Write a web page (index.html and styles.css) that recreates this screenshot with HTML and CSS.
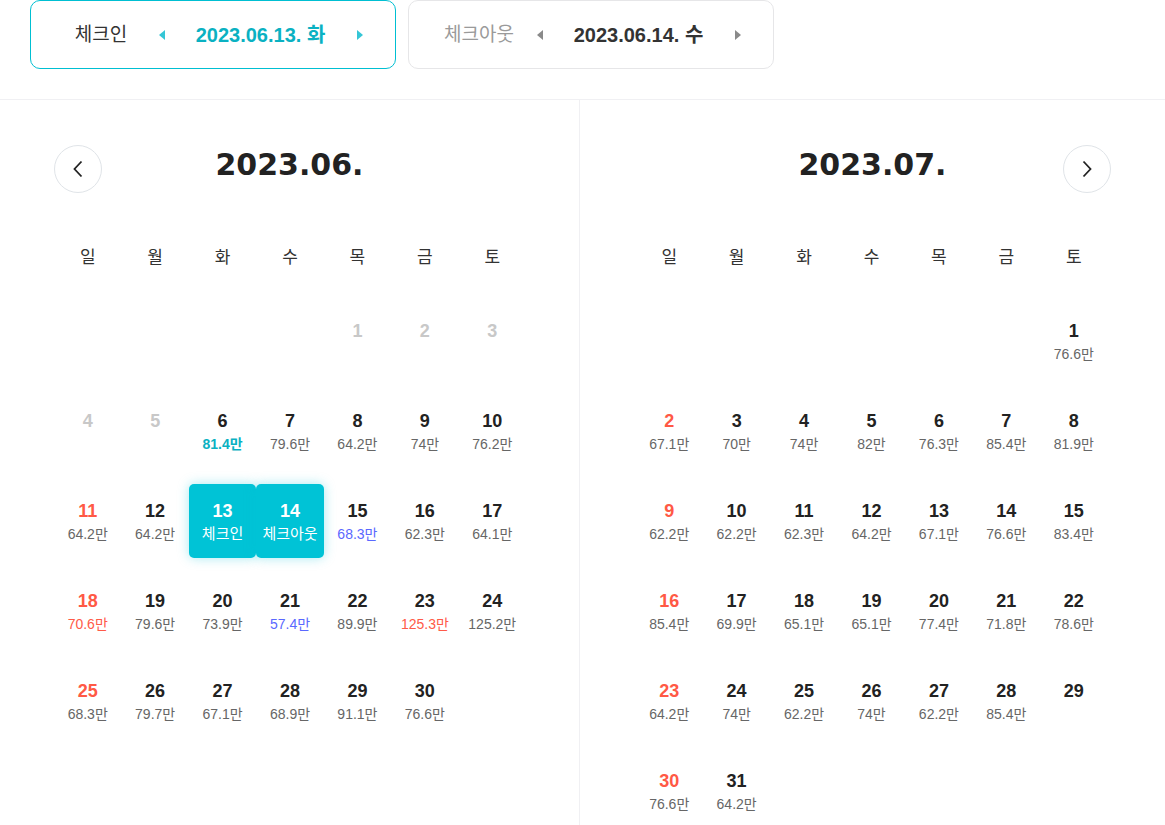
FILE: index.html
```html
<!DOCTYPE html>
<html lang="ko">
<head>
<meta charset="utf-8">
<title>날짜 선택</title>
<link rel="stylesheet" href="styles.css">
</head>
<body>
<div class="page">
  <div class="topbar">
    <div class="datebox active">
      <span class="label">체크인</span>
      <span class="tri left"></span>
      <span class="date">2023.06.13. 화</span>
      <span class="tri right"></span>
    </div>
    <div class="datebox">
      <span class="label">체크아웃</span>
      <span class="tri left"></span>
      <span class="date">2023.06.14. 수</span>
      <span class="tri right"></span>
    </div>
  </div>

  <div class="months">
    <section class="month first">
      <div class="mhead">
        <button class="circle"><svg width="12" height="18" viewBox="0 0 12 18"><path d="M9.5 1.5 L2.5 9 L9.5 16.5" fill="none" stroke="#222" stroke-width="1.8"/></svg></button>
        <h2 class="mtitle">2023.06.</h2>
        <span class="spacer"></span>
      </div>
      <div class="week">
        <span>일</span><span>월</span><span>화</span><span>수</span><span>목</span><span>금</span><span>토</span>
      </div>
      <div class="days">
        <div class="day"></div><div class="day"></div><div class="day"></div><div class="day"></div>
        <div class="day off"><b>1</b></div>
        <div class="day off"><b>2</b></div>
        <div class="day off"><b>3</b></div>

        <div class="day off"><b>4</b></div>
        <div class="day off"><b>5</b></div>
        <div class="day"><b>6</b><i class="best">81.4만</i></div>
        <div class="day"><b>7</b><i>79.6만</i></div>
        <div class="day"><b>8</b><i>64.2만</i></div>
        <div class="day"><b>9</b><i>74만</i></div>
        <div class="day"><b>10</b><i>76.2만</i></div>

        <div class="day sun"><b>11</b><i>64.2만</i></div>
        <div class="day"><b>12</b><i>64.2만</i></div>
        <div class="day sel"><b>13</b><i>체크인</i></div>
        <div class="day sel"><b>14</b><i>체크아웃</i></div>
        <div class="day"><b>15</b><i class="low">68.3만</i></div>
        <div class="day"><b>16</b><i>62.3만</i></div>
        <div class="day"><b>17</b><i>64.1만</i></div>

        <div class="day sun"><b>18</b><i class="high">70.6만</i></div>
        <div class="day"><b>19</b><i>79.6만</i></div>
        <div class="day"><b>20</b><i>73.9만</i></div>
        <div class="day"><b>21</b><i class="low">57.4만</i></div>
        <div class="day"><b>22</b><i>89.9만</i></div>
        <div class="day"><b>23</b><i class="high">125.3만</i></div>
        <div class="day"><b>24</b><i>125.2만</i></div>

        <div class="day sun"><b>25</b><i>68.3만</i></div>
        <div class="day"><b>26</b><i>79.7만</i></div>
        <div class="day"><b>27</b><i>67.1만</i></div>
        <div class="day"><b>28</b><i>68.9만</i></div>
        <div class="day"><b>29</b><i>91.1만</i></div>
        <div class="day"><b>30</b><i>76.6만</i></div>
      </div>
    </section>

    <section class="month second">
      <div class="mhead">
        <span class="spacer"></span>
        <h2 class="mtitle">2023.07.</h2>
        <button class="circle"><svg width="12" height="18" viewBox="0 0 12 18"><path d="M2.5 1.5 L9.5 9 L2.5 16.5" fill="none" stroke="#222" stroke-width="1.8"/></svg></button>
      </div>
      <div class="week">
        <span>일</span><span>월</span><span>화</span><span>수</span><span>목</span><span>금</span><span>토</span>
      </div>
      <div class="days">
        <div class="day"></div><div class="day"></div><div class="day"></div><div class="day"></div><div class="day"></div><div class="day"></div>
        <div class="day"><b>1</b><i>76.6만</i></div>

        <div class="day sun"><b>2</b><i>67.1만</i></div>
        <div class="day"><b>3</b><i>70만</i></div>
        <div class="day"><b>4</b><i>74만</i></div>
        <div class="day"><b>5</b><i>82만</i></div>
        <div class="day"><b>6</b><i>76.3만</i></div>
        <div class="day"><b>7</b><i>85.4만</i></div>
        <div class="day"><b>8</b><i>81.9만</i></div>

        <div class="day sun"><b>9</b><i>62.2만</i></div>
        <div class="day"><b>10</b><i>62.2만</i></div>
        <div class="day"><b>11</b><i>62.3만</i></div>
        <div class="day"><b>12</b><i>64.2만</i></div>
        <div class="day"><b>13</b><i>67.1만</i></div>
        <div class="day"><b>14</b><i>76.6만</i></div>
        <div class="day"><b>15</b><i>83.4만</i></div>

        <div class="day sun"><b>16</b><i>85.4만</i></div>
        <div class="day"><b>17</b><i>69.9만</i></div>
        <div class="day"><b>18</b><i>65.1만</i></div>
        <div class="day"><b>19</b><i>65.1만</i></div>
        <div class="day"><b>20</b><i>77.4만</i></div>
        <div class="day"><b>21</b><i>71.8만</i></div>
        <div class="day"><b>22</b><i>78.6만</i></div>

        <div class="day sun"><b>23</b><i>64.2만</i></div>
        <div class="day"><b>24</b><i>74만</i></div>
        <div class="day"><b>25</b><i>62.2만</i></div>
        <div class="day"><b>26</b><i>74만</i></div>
        <div class="day"><b>27</b><i>62.2만</i></div>
        <div class="day"><b>28</b><i>85.4만</i></div>
        <div class="day"><b>29</b></div>

        <div class="day sun"><b>30</b><i>76.6만</i></div>
        <div class="day"><b>31</b><i>64.2만</i></div>
      </div>
    </section>
  </div>
</div>
</body>
</html>
```

FILE: styles.css
```css
* { box-sizing: border-box; }
html, body {
  margin: 0;
  padding: 0;
  background: #fff;
}
body {
  font-family: "Liberation Sans", "Noto Sans CJK KR", sans-serif;
  color: #222;
  overflow: hidden;
}
.page {
  width: 1165px;
  height: 825px;
}
.topbar {
  display: flex;
  gap: 12px;
  padding: 0 0 0 30px;
  height: 100px;
  border-bottom: 1px solid #f0f0f3;
}
.datebox {
  width: 366px;
  height: 69px;
  border: 1px solid #e6e6e8;
  border-radius: 10px;
  display: grid;
  grid-template-columns: 96px 26px 171px 28px;
  align-items: center;
  padding-left: 22px;
}
.datebox.active {
  border-color: #00bfd2;
}
.datebox .label {
  text-align: center;
  font-size: 19px;
  color: #9a9a9a;
  line-height: 24px;
  white-space: nowrap;
}
.datebox.active .label { color: #333; }
.datebox .date {
  text-align: center;
  font-size: 20px;
  font-weight: bold;
  color: #333;
  line-height: 24px;
  white-space: nowrap;
}
.datebox.active .date { color: #0ab1c2; }
.tri {
  justify-self: center;
  width: 0;
  height: 0;
  border-top: 5.5px solid transparent;
  border-bottom: 5.5px solid transparent;
}
.tri.left { border-right: 6px solid #8a8a8a; }
.tri.right { border-left: 6px solid #8a8a8a; }
.datebox.active .tri.left { border-right-color: #35c6d6; }
.datebox.active .tri.right { border-left-color: #35c6d6; }

.months {
  display: grid;
  grid-template-columns: 580px 585px;
  height: 725px;
}
.month {
  padding: 45px 54px 0;
}
.month.first {
  border-right: 1px solid #f0f0f3;
}
.month.second .week,
.month.second .days {
  position: relative;
  left: -1px;
}
.mhead {
  display: flex;
  align-items: center;
  justify-content: space-between;
  height: 48px;
}
.circle, .spacer {
  width: 48px;
  height: 48px;
  flex: none;
}
.circle {
  border: 1px solid #e0e4e8;
  border-radius: 50%;
  background: #fff;
  display: flex;
  align-items: center;
  justify-content: center;
  padding: 0;
}
.mtitle {
  margin: 0;
  font-family: "DejaVu Sans", sans-serif;
  font-size: 30px;
  font-weight: bold;
  color: #222;
  line-height: 40px;
  position: relative;
  top: -4px;
}
.week, .days {
  width: 472px;
  margin: 0 auto;
  display: grid;
  grid-template-columns: repeat(7, 1fr);
}
.week {
  margin-top: 53px;
}
.week span {
  text-align: center;
  font-size: 17px;
  line-height: 24px;
  color: #333;
}
.days {
  margin-top: 26px;
  grid-auto-rows: 90px;
}
.day {
  margin: 8px 0;
  height: 74px;
  padding-top: 16px;
  display: flex;
  flex-direction: column;
  align-items: center;
  border-radius: 5px;
}
.day b {
  font-size: 18px;
  line-height: 22px;
  font-weight: bold;
  color: #222;
}
.day i {
  font-style: normal;
  font-size: 14px;
  line-height: 20px;
  margin-top: 2px;
  color: #666;
  white-space: nowrap;
}
.day.off b { color: #c8c8c8; }
.day.sun b { color: #ff5945; }
.day i.best { color: #0ab1c2; font-weight: bold; }
.day i.high { color: #ff5a48; }
.day i.low { color: #5a68ff; }
.day.sel {
  background: #00c3d6;
  box-shadow: 0 0 12px rgba(0, 195, 214, 0.35);
}
.day.sel b, .day.sel i { color: #fff; }
.day.sel i { font-size: 15px; }
```
